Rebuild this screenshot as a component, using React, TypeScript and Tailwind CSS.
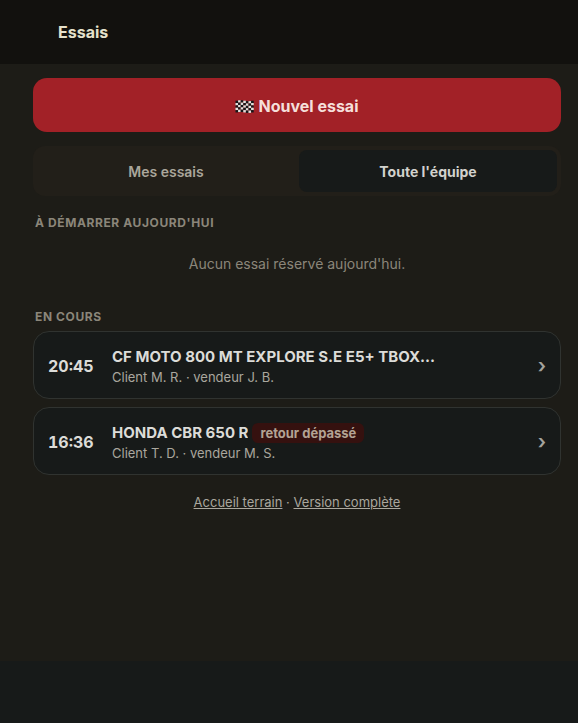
import { useState } from "react";
import clsx from "clsx";

type Trial = {
  id: number;
  time: string;
  bike: string;
  client: string;
  seller: string;
  late?: boolean;
};

const ongoing: Trial[] = [
  { id: 1, time: "20:45", bike: "CF MOTO 800 MT EXPLORE S.E E5+ TBOX...", client: "M. R.", seller: "J. B." },
  { id: 2, time: "16:36", bike: "HONDA CBR 650 R", client: "T. D.", seller: "M. S.", late: true },
];

const tabs = ["Mes essais", "Toute l'équipe"];

function CheckeredFlag() {
  const cells = [];
  for (let col = 0; col < 7; col++) {
    // each column is shifted a little so the cloth looks like it waves
    const wave = Math.sin((col / 6) * Math.PI * 2) * -0.5 + 0.7;
    for (let row = 0; row < 5; row++) {
      cells.push(
        <rect
          key={`${col}-${row}`}
          x={0.5 + col * 2.6}
          y={wave + row * 2.35}
          width={2.6}
          height={2.35}
          fill={(col + row) % 2 === 0 ? "#14181a" : "#dde3df"}
        />
      );
    }
  }
  return (
    <svg className="h-[13px] w-[19px]" viewBox="0 0 19 13" aria-hidden="true">
      {cells}
    </svg>
  );
}

function SectionTitle({ children }: { children: string }) {
  return (
    <h2 className="px-0.5 text-xs leading-4 font-bold tracking-wider text-[#8b867a] uppercase">{children}</h2>
  );
}

function TrialCard({ trial }: { trial: Trial }) {
  return (
    <a
      href="#"
      className="flex items-center rounded-2xl border border-[#303330] bg-[#171a19] px-3.5 pt-3.5 pb-3"
    >
      <span className="w-16 shrink-0 text-base font-bold text-[#dcdcd8] tabular-nums">{trial.time}</span>
      <span className="min-w-0 flex-1">
        <span className="flex items-center gap-1">
          <span className="truncate text-[15px] leading-[22px] font-bold text-[#dcdcd8]">{trial.bike}</span>
          {trial.late && (
            <span className="shrink-0 rounded-md bg-[#35110f] px-2 text-[13px] leading-5 font-bold text-[#b3a394]">
              retour dépassé
            </span>
          )}
        </span>
        <span className="block text-[13px] leading-[18px] text-[#aaa79e]">
          Client {trial.client} · vendeur {trial.seller}
        </span>
      </span>
      <span className="text-xl leading-6 font-semibold text-[#a4a39d]">›</span>
    </a>
  );
}

export default function App() {
  const [activeTab, setActiveTab] = useState(1);

  return (
    <div className="flex min-h-screen flex-col bg-[#1d1c17] font-['Inter',sans-serif]">
      <header className="flex h-16 items-center bg-[#12110e] px-[58px]">
        <h1 className="text-base font-bold text-[#e5e1cb]">Essais</h1>
      </header>

      <main className="flex-1 pt-3.5 pr-[17px] pl-[33px]">
        <button
          type="button"
          className="flex h-[54px] w-full items-center justify-center gap-1 rounded-[14px] bg-[#a22127] pt-0.5 text-base font-bold text-[#f5dfda]"
        >
          <CheckeredFlag />
          Nouvel essai
        </button>

        <div className="mt-3.5 flex gap-1 rounded-xl bg-[#221f19] p-1">
          {tabs.map((tab, i) => (
            <button
              key={tab}
              type="button"
              aria-pressed={activeTab === i}
              onClick={() => setActiveTab(i)}
              className={clsx(
                "h-[42px] flex-1 rounded-lg pt-0.5 text-sm",
                activeTab === i ? "bg-[#171a19] font-bold text-[#d2d2cd]" : "font-semibold text-[#aaa69b]"
              )}
            >
              {tab}
            </button>
          ))}
        </div>

        <section className="mt-[19px]">
          <SectionTitle>À démarrer aujourd'hui</SectionTitle>
          <p className="py-6 text-center text-sm leading-[18px] text-[#8b867a]">Aucun essai réservé aujourd'hui.</p>
        </section>

        <section className="mt-3">
          <SectionTitle>En cours</SectionTitle>
          <div className="mt-1.5 flex flex-col gap-2">
            {ongoing.map((trial) => (
              <TrialCard key={trial.id} trial={trial} />
            ))}
          </div>
        </section>

        <p className="mt-[18px] text-center text-[13px] leading-[18px] text-[#aaa79e]">
          <a href="#" className="underline">
            Accueil terrain
          </a>
          {" · "}
          <a href="#" className="underline">
            Version complète
          </a>
        </p>
      </main>

      <footer className="h-[62px] bg-[#171a19]" />
    </div>
  );
}
